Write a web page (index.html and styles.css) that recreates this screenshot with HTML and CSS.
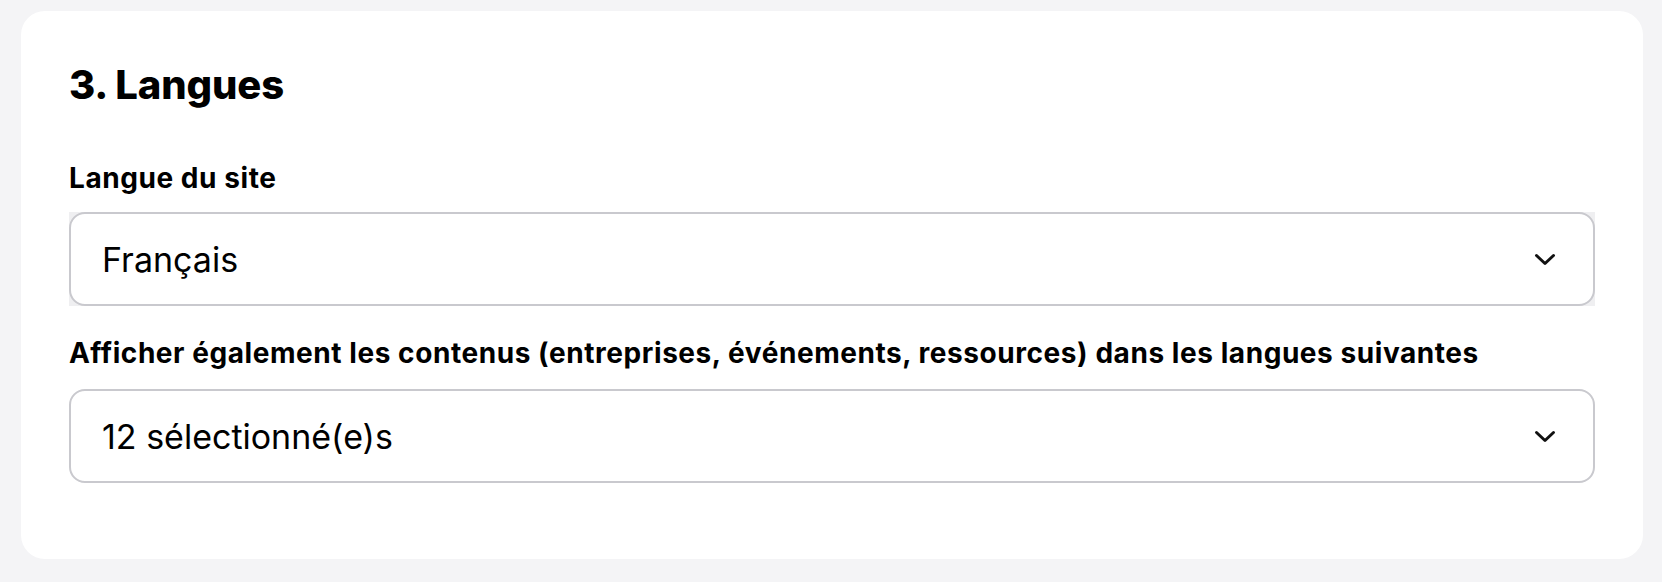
FILE: index.html
```html
<!DOCTYPE html>
<html lang="fr">
<head>
<meta charset="utf-8">
<title>3. Langues</title>
<link rel="stylesheet" href="styles.css">
</head>
<body>
<section class="card">
  <h2 class="card-title">3. Langues</h2>
  <div class="field field--site">
    <label class="field-label">Langue du site</label>
    <div class="select-wrap select-wrap--shaded">
      <div class="select">
        <span class="select-value">Français</span>
        <svg class="chevron" viewBox="0 0 22 13" width="22" height="13"><path d="M2.5 2.5 L11 10.5 L19.5 2.5" fill="none" stroke="#111" stroke-width="3" stroke-linecap="round" stroke-linejoin="round"/></svg>
      </div>
    </div>
  </div>
  <div class="field">
    <label class="field-label">Afficher également les contenus (entreprises, événements, ressources) dans les langues suivantes</label>
    <div class="select-wrap">
      <div class="select">
        <span class="select-value">12 sélectionné(e)s</span>
        <svg class="chevron" viewBox="0 0 22 13" width="22" height="13"><path d="M2.5 2.5 L11 10.5 L19.5 2.5" fill="none" stroke="#111" stroke-width="3" stroke-linecap="round" stroke-linejoin="round"/></svg>
      </div>
    </div>
  </div>
</section>
</body>
</html>
```

FILE: styles.css
```css
* { box-sizing: border-box; }
html, body { height: 100%; }
body {
  margin: 0;
  padding: 11px 19px 23px 21px;
  background: #f4f4f6;
  font-family: "Inter", "Noto Sans", sans-serif;
  color: #000;
}
.card {
  background: #fff;
  border-radius: 24px;
  height: 548px;
  padding: 52px 48px 0 48px;
  display: flex;
  flex-direction: column;
}
.card-title {
  margin: 0 0 53px 0;
  font-size: 40px;
  line-height: 44px;
  font-weight: 800;
  letter-spacing: -0.1px;
}
.field {
  display: flex;
  flex-direction: column;
  gap: 18px;
  margin-bottom: 27px;
}
.field--site {
  gap: 16px;
  margin-bottom: 29px;
}
.field-label {
  font-size: 28px;
  line-height: 36px;
  font-weight: 700;
  letter-spacing: 0.56px;
}
.select-wrap {
  background: #fff;
}
.select-wrap--shaded {
  background: #efeff1;
}
.select {
  height: 94px;
  border: 2px solid #c9c9ce;
  border-radius: 16px;
  background: #fff;
  display: flex;
  align-items: center;
  justify-content: space-between;
  padding: 0 37px 0 31px;
}
.select-value {
  font-size: 34px;
  font-weight: 400;
}
.chevron { display: block; }
```
